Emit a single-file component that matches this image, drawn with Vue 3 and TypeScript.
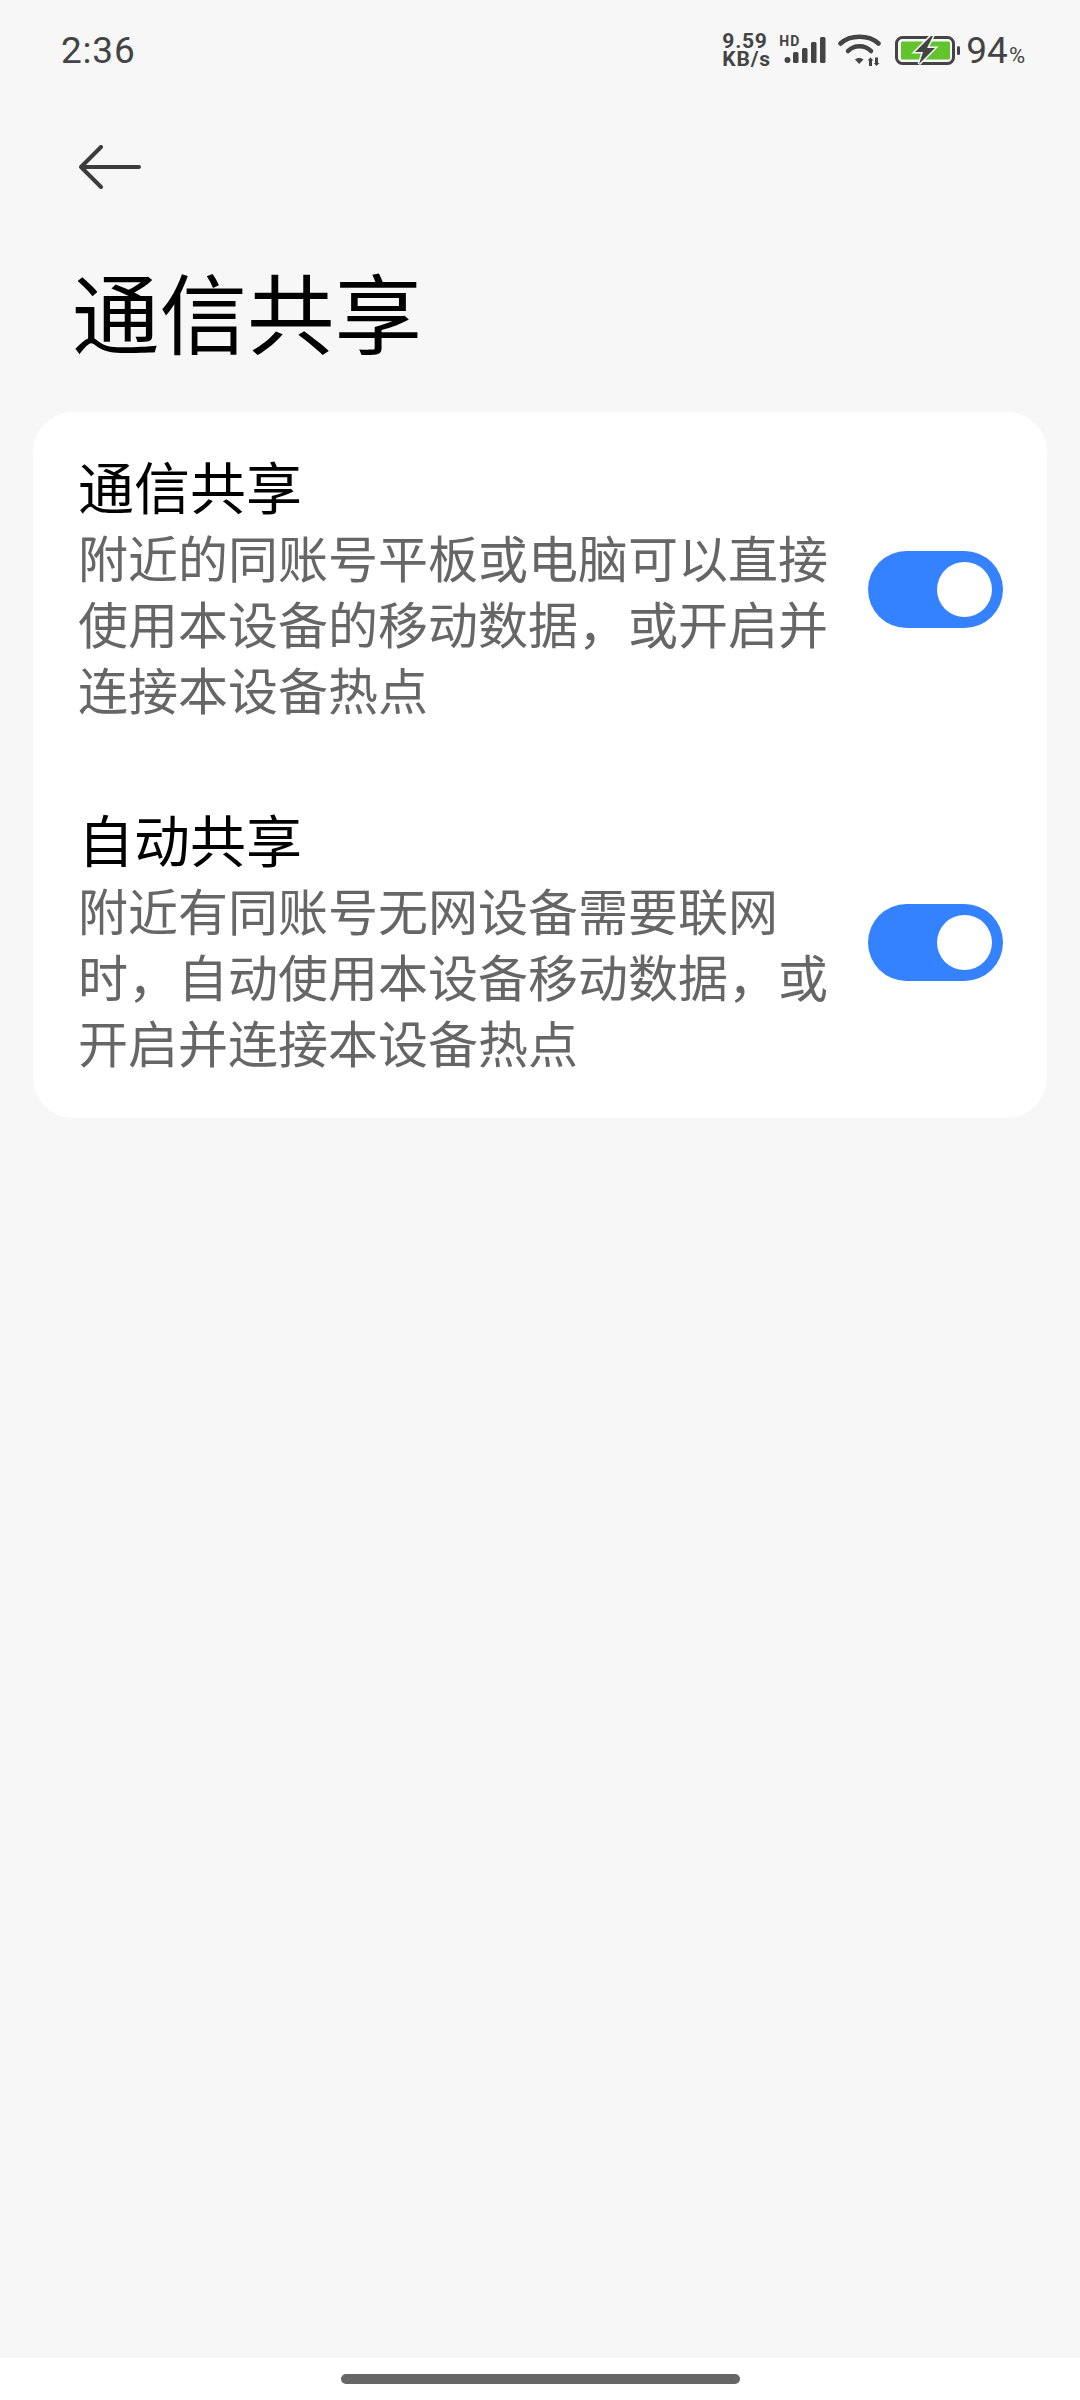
<script setup lang="ts">
interface Setting {
  title: string
  desc: string
  on: boolean
}

const settings: Setting[] = [
  {
    title: '通信共享',
    desc: '附近的同账号平板或电脑可以直接使用本设备的移动数据，或开启并连接本设备热点',
    on: true,
  },
  {
    title: '自动共享',
    desc: '附近有同账号无网设备需要联网时，自动使用本设备移动数据，或开启并连接本设备热点',
    on: true,
  },
]
</script>

<template>
  <div class="screen">
    <div class="status-bar">
      <span class="clock">2:36</span>
      <div class="status-icons">
        <div class="speed">9.59 KB/s</div>
        <div class="signal">
          <span class="hd">HD</span>
          <svg width="43" height="27" viewBox="0 0 43 27">
            <circle cx="4.5" cy="23" r="3" fill="#444" />
            <rect x="10" y="15" width="5.5" height="11" rx="1.5" fill="#444" />
            <rect x="19" y="11" width="5.5" height="15" rx="1.5" fill="#444" />
            <rect x="28" y="5" width="5.5" height="21" rx="1.5" fill="#444" />
            <rect x="37" y="0" width="5.5" height="26" rx="1.5" fill="#444" />
          </svg>
        </div>
        <svg class="wifi" width="44" height="34" viewBox="0 0 44 34">
          <path d="M2.5 10.5 C12 1.5 31 1.5 40.5 10.5" fill="none" stroke="#444" stroke-width="4.5" stroke-linecap="round" />
          <path d="M10 18 C16 11.5 27 11.5 33 18" fill="none" stroke="#444" stroke-width="4.5" stroke-linecap="round" />
          <path d="M17 26.5 C19.5 24.5 23 24.5 25.5 26.5 L21.2 31 Z" fill="#444" />
          <path d="M31 33 V27.5 H29.5 L32.5 24.5 L35.5 27.5 H34 V33 Z" fill="#444" />
          <path d="M37 24.5 V30 H35.8 L38.5 33 L41.5 30 H40 V24.5 Z" fill="#444" />
        </svg>
        <svg class="battery" width="66" height="30" viewBox="0 0 66 30">
          <rect x="1.5" y="2.5" width="57" height="26" rx="6" fill="none" stroke="#444" stroke-width="3" />
          <rect x="6" y="6.5" width="49" height="18" rx="1.5" fill="#62c42d" />
          <path d="M36 1 L20 17 H28 L24 29 L40 13 H32 L38 1 Z" fill="#444" stroke="#f7f7f7" stroke-width="3" paint-order="stroke" />
          <rect x="62" y="11" width="3" height="9" rx="1.5" fill="#444" />
        </svg>
        <div class="level">94<span class="percent">%</span></div>
      </div>
    </div>

    <button class="back" aria-label="返回">
      <svg width="62" height="44" viewBox="0 0 62 44">
        <path d="M2 22 H60 M22 2 L2 22 L22 42" fill="none" stroke="#3c3c3c" stroke-width="4" stroke-linecap="round" stroke-linejoin="round" />
      </svg>
    </button>

    <h1 class="page-title">通信共享</h1>

    <div class="card">
      <div v-for="item in settings" :key="item.title" class="row">
        <div class="text">
          <div class="title">{{ item.title }}</div>
          <div class="desc">{{ item.desc }}</div>
        </div>
        <div class="switch" :class="{ on: item.on }"><span class="knob"></span></div>
      </div>
    </div>

    <div class="spacer"></div>
    <div class="nav-bar"><span class="handle"></span></div>
  </div>
</template>

<style>
body {
  margin: 0;
  background: #f7f7f7;
}
</style>

<style scoped>
.screen {
  width: 1080px;
  height: 2400px;
  display: flex;
  flex-direction: column;
  background: #f7f7f7;
  font-family: "Liberation Sans", "Noto Sans CJK SC", sans-serif;
  overflow: hidden;
}

.status-bar {
  height: 100px;
  padding: 0 55px 0 61px;
  display: flex;
  align-items: center;
  justify-content: space-between;
  box-sizing: border-box;
  color: #444;
}

.clock {
  font-family: "Roboto", sans-serif;
  font-size: 37px;
  letter-spacing: 0.8px;
}

.status-icons {
  display: flex;
  align-items: center;
}

.speed {
  width: 50px;
  font-family: "Roboto", sans-serif;
  font-weight: 700;
  font-size: 21px;
  line-height: 18px;
  letter-spacing: 0.8px;
  margin-right: 11px;
}

.signal {
  position: relative;
  margin-right: 12px;
  display: flex;
}

.hd {
  position: absolute;
  left: -4px;
  top: -2px;
  font-family: "Roboto", sans-serif;
  font-weight: 700;
  font-size: 14px;
  line-height: 13px;
  letter-spacing: 1px;
}

.wifi {
  margin-right: 13px;
}

.battery {
  margin-right: 5px;
}

.level {
  font-family: "Roboto", sans-serif;
  font-size: 37px;
}

.percent {
  font-size: 22px;
  margin-left: 1px;
}

.back {
  align-self: flex-start;
  margin: 45px 0 0 79px;
  padding: 0;
  border: none;
  background: none;
  display: flex;
}

.page-title {
  margin: 69px 0 0 72px;
  font-size: 87.5px;
  line-height: 120px;
  font-weight: 400;
  color: #000;
}

.card {
  margin: 34px 33px 0;
  padding: 16px 0 15px;
  background: #fff;
  border-radius: 40px;
  display: flex;
  flex-direction: column;
  gap: 31px;
}

.row {
  display: flex;
  align-items: center;
  padding: 24px 44px 24px 45px;
}

.text {
  width: 760px;
}

.title {
  font-size: 56px;
  line-height: 76px;
  color: #000;
}

.desc {
  font-size: 50px;
  line-height: 66px;
  color: #666;
}

.switch {
  margin-left: auto;
  width: 135px;
  height: 77px;
  border-radius: 39px;
  background: #ccc;
  display: flex;
  align-items: center;
  box-sizing: border-box;
  padding: 0 11px;
}

.switch.on {
  background: #3482ff;
  justify-content: flex-end;
}

.knob {
  width: 55px;
  height: 55px;
  border-radius: 50%;
  background: #fff;
}

.spacer {
  flex: 1;
}

.nav-bar {
  height: 42px;
  background: #fff;
  display: flex;
  justify-content: center;
  padding-top: 16px;
  box-sizing: border-box;
}

.handle {
  width: 399px;
  height: 10px;
  border-radius: 5px;
  background: #666;
}
</style>
